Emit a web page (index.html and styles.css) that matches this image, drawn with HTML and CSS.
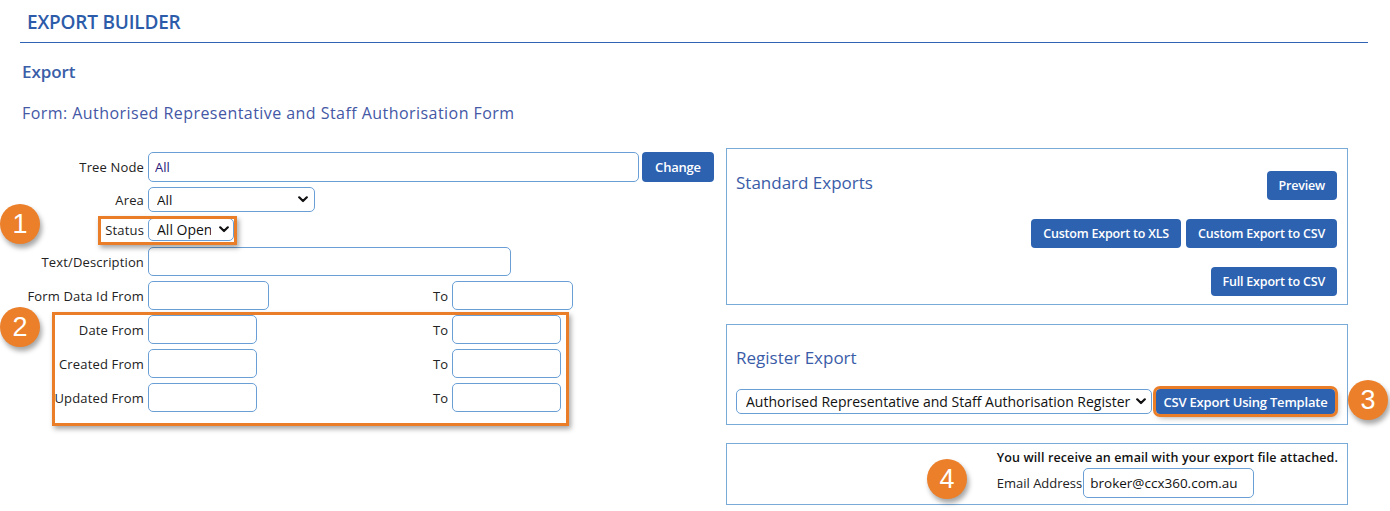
FILE: index.html
```html
<!DOCTYPE html>
<html lang="en">
<head>
<meta charset="utf-8">
<title>Export Builder</title>
<link rel="stylesheet" href="styles.css">
</head>
<body>
<div class="page">
  <div class="header"><h1>EXPORT BUILDER</h1></div>
  <h2 class="section">Export</h2>
  <p class="form-title">Form: Authorised Representative and Staff Authorisation Form</p>

  <div class="main">
    <div class="left">
      <div class="row r-tree">
        <label class="lbl">Tree Node</label>
        <input class="inp w-tree" type="text" value="All">
        <button class="btn btn-change">Change</button>
      </div>
      <div class="row r-area">
        <label class="lbl">Area</label>
        <select class="sel w-area"><option>All</option></select>
      </div>
      <div class="row r-status">
        <label class="lbl">Status</label>
        <select class="sel sel-status"><option>All Open</option></select>
      </div>
      <div class="row r-text">
        <label class="lbl">Text/Description</label>
        <input class="inp w-text" type="text">
      </div>
      <div class="row r-range">
        <label class="lbl">Form Data Id From</label>
        <span class="cell"><input class="inp w-id" type="text"></span>
        <label class="lbl-to">To</label>
        <input class="inp w-id" type="text">
      </div>
      <div class="row r-range">
        <label class="lbl">Date From</label>
        <span class="cell"><input class="inp w-date" type="text"></span>
        <label class="lbl-to">To</label>
        <input class="inp w-date" type="text">
      </div>
      <div class="row r-range">
        <label class="lbl">Created From</label>
        <span class="cell"><input class="inp w-date" type="text"></span>
        <label class="lbl-to">To</label>
        <input class="inp w-date" type="text">
      </div>
      <div class="row r-range">
        <label class="lbl">Updated From</label>
        <span class="cell"><input class="inp w-date" type="text"></span>
        <label class="lbl-to">To</label>
        <input class="inp w-date" type="text">
      </div>

      <div class="hl hl-status"></div>
      <div class="hl hl-dates"></div>
      <span class="badge b1">1</span>
      <span class="badge b2">2</span>
    </div>

    <div class="right">
      <div class="panel p-standard">
        <div class="p-head">
          <span class="p-title">Standard Exports</span>
          <button class="btn">Preview</button>
        </div>
        <div class="p-btns">
          <button class="btn btn-xls">Custom Export to XLS</button>
          <button class="btn">Custom Export to CSV</button>
        </div>
        <div class="p-btns">
          <button class="btn">Full Export to CSV</button>
        </div>
      </div>

      <div class="panel p-register">
        <div class="p-title">Register Export</div>
        <div class="reg-row">
          <select class="sel w-reg"><option>Authorised Representative and Staff Authorisation Register</option></select>
          <button class="btn btn-tpl">CSV Export Using Template</button>
        </div>
        <span class="badge b3">3</span>
      </div>

      <div class="panel p-email">
        <div class="email-block">
          <div class="email-note">You will receive an email with your export file attached.</div>
          <div class="email-row">
            <label class="lbl-email">Email Address</label>
            <input class="inp w-email" type="text" value="broker@ccx360.com.au">
          </div>
        </div>
        <span class="badge b4">4</span>
      </div>
    </div>
  </div>
</div>
</body>
</html>
```

FILE: styles.css
```css
* { box-sizing: border-box; }
html, body { margin: 0; padding: 0; background: #ffffff; }
body {
  font-family: "Open Sans", "DejaVu Sans", sans-serif;
  color: #222;
  width: 1390px;
  height: 511px;
  overflow: hidden;
}
.page { padding: 0 22px 0 20px; }

.header {
  padding: 10px 0 0 7px;
  height: 43px;
  border-bottom: 1px solid #2f64b4;
}
.header h1 {
  margin: 0;
  font-size: 19px;
  line-height: 24px;
  font-weight: 600;
  color: #2c5ca9;
  letter-spacing: -0.2px;
}
.section {
  margin: 18px 0 0 2px;
  font-size: 17px;
  line-height: 22px;
  font-weight: 600;
  color: #3a5ea8;
  letter-spacing: -0.1px;
}
.form-title {
  margin: 20px 0 0 2px;
  font-size: 16px;
  line-height: 20px;
  color: #4458a6;
  letter-spacing: 0.45px;
}

.main {
  display: flex;
  margin-top: 25px;
}
.left {
  position: relative;
  flex: 0 0 706px;
  padding-top: 4px;
}
.right {
  flex: 0 0 622px;
  display: flex;
  flex-direction: column;
}

.row { display: flex; align-items: center; }
.r-tree { height: 30px; }
.r-area { height: 25px; margin-top: 5px; }
.r-status { height: 23px; margin-top: 6px; }
.r-text { height: 29px; margin-top: 6px; }
.r-range { height: 29px; margin-top: 5px; }

.lbl {
  flex: 0 0 128px;
  text-align: right;
  padding-right: 4px;
  font-size: 13px;
  letter-spacing: 0.15px;
  color: #222;
  white-space: nowrap;
}
.cell { flex: 0 0 152px; display: flex; }
.lbl-to {
  flex: 0 0 152px;
  text-align: right;
  padding-right: 4px;
  font-size: 13px;
}

.inp {
  height: 29px;
  border: 1px solid #6a9fd6;
  border-radius: 5px;
  padding: 0 6px;
  font-family: inherit;
  font-size: 13px;
  color: #2a1a7a;
  background: #fff;
  outline: none;
}
.w-tree { width: 491px; height: 30px; }
.w-text { width: 363px; }
.w-id { width: 121px; }
.w-date { width: 109px; }

.sel {
  -webkit-appearance: none;
  appearance: none;
  height: 25px;
  border: 1px solid #6a9fd6;
  border-radius: 5px;
  padding: 0 22px 0 8px;
  font-family: inherit;
  font-size: 13.5px;
  color: #111;
  background: #fff url("data:image/svg+xml;utf8,<svg xmlns='http://www.w3.org/2000/svg' width='10' height='7' viewBox='0 0 10 7'><path d='M1.2 1.3 L5 5 L8.8 1.3' fill='none' stroke='%23111' stroke-width='2.2' stroke-linecap='round' stroke-linejoin='round'/></svg>") no-repeat right 6px center;
  outline: none;
}
.w-area { width: 167px; }
.sel-status {
  width: 86px;
  height: 23px;
  font-size: 14px;
  border-color: #6a9fd6;
  background-position: right 4px center;
}

.btn {
  font-family: inherit;
  font-size: 12.5px;
  font-weight: 600;
  color: #fff;
  background: #2d62b1;
  border: 0;
  border-radius: 4px;
  height: 29px;
  padding: 0 12px;
  letter-spacing: -0.2px;
  white-space: nowrap;
}
.btn-change { margin-left: 3px; width: 72px; height: 30px; padding: 0; font-size: 13px; }

.hl {
  position: absolute;
  border: 3px solid #ea7d28;
  box-shadow: 2px 3px 5px rgba(0,0,0,0.35);
}
.hl-status { left: 78px; top: 68px; width: 139px; height: 29px; }
.hl-dates { left: 32px; top: 164px; width: 517px; height: 114px; }

.badge {
  position: absolute;
  width: 40px;
  height: 40px;
  border-radius: 50%;
  background: #eb7f2a;
  color: #fff;
  font-family: "Liberation Sans", sans-serif;
  font-size: 27px;
  line-height: 40px;
  text-align: center;
  box-shadow: 2px 4px 5px rgba(0,0,0,0.35);
}
.b1 { left: -20px; top: 56px; }
.b2 { left: -20px; top: 159px; }

.panel {
  position: relative;
  border: 1px solid #7aaad8;
}
.p-standard { height: 157px; padding: 22px 10px 0 9px; }
.p-head { display: flex; justify-content: space-between; align-items: center; }
.p-title {
  font-size: 17px;
  line-height: 20px;
  color: #3a5ca8;
}
.p-head .p-title { margin-top: -6px; }
.p-btns { display: flex; justify-content: flex-end; gap: 5px; margin-top: 19px; }

.p-register { margin-top: 19px; height: 101px; padding: 23px 10px 0 9px; }
.reg-row { display: flex; align-items: center; margin-top: 21px; }
.w-reg { width: 416px; font-size: 14px; padding: 0 18px 0 9px; background-position: right 5px center; }
.btn-tpl {
  margin-left: 4px;
  height: 25px;
  width: 179px;
  padding: 0;
  font-size: 13px;
  outline: 3px solid #ea7d28;
  box-shadow: 2px 3px 6px rgba(0,0,0,0.4);
}
.b3 { right: -41px; top: 55px; }

.p-email { margin-top: 18px; height: 62px; padding: 6px 9px 0 0; display: flex; justify-content: flex-end; }
.email-note { font-size: 12.5px; font-weight: 600; color: #111; line-height: 16px; letter-spacing: 0.12px; }
.email-row { display: flex; align-items: center; margin-top: 2px; }
.lbl-email { font-size: 13px; color: #222; }
.w-email { margin-left: 1px; width: 171px; height: 30px; font-size: 13.5px; color: #111; }
.b4 { left: 200px; top: 15px; }
```
